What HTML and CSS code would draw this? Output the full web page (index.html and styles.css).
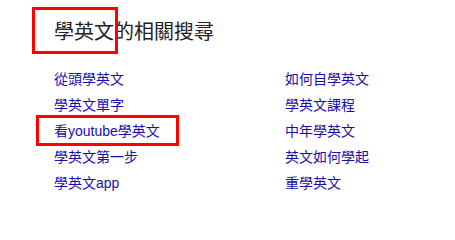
FILE: index.html
```html
<!DOCTYPE html>
<html lang="zh-Hant">
<head>
<meta charset="utf-8">
<link rel="stylesheet" href="styles.css">
</head>
<body>
<div class="related">
  <h2 class="title">學英文的相關搜尋</h2>
  <div class="grid">
    <a class="link" href="#">從頭學英文</a>
    <a class="link" href="#">如何自學英文</a>
    <a class="link" href="#">學英文單字</a>
    <a class="link" href="#">學英文課程</a>
    <a class="link" href="#">看youtube學英文</a>
    <a class="link" href="#">中年學英文</a>
    <a class="link" href="#">學英文第一步</a>
    <a class="link" href="#">英文如何學起</a>
    <a class="link" href="#">學英文app</a>
    <a class="link" href="#">重學英文</a>
  </div>
  <div class="mark mark-title"></div>
  <div class="mark mark-link"></div>
</div>
</body>
</html>
```
FILE: styles.css
```css
html, body {
  margin: 0;
  padding: 0;
  background: #fff;
}
.related {
  position: relative;
  width: 455px;
  height: 224px;
  padding: 18px 0 0 54px;
  box-sizing: border-box;
  font-family: "Liberation Sans", "Noto Sans CJK TC", sans-serif;
}
.title {
  margin: 0;
  font-size: 20px;
  font-weight: normal;
  line-height: 28px;
  color: #222;
}
.grid {
  display: grid;
  grid-template-columns: 231px 1fr;
  grid-auto-rows: 26px;
  margin-top: 20px;
}
.link {
  font-size: 14px;
  line-height: 26px;
  color: #1a0dab;
  text-decoration: none;
}
.mark {
  position: absolute;
  border: 3px solid #f00;
  box-sizing: border-box;
}
.mark-title {
  left: 32px;
  top: 7px;
  width: 86px;
  height: 47px;
}
.mark-link {
  left: 36px;
  top: 115px;
  width: 143px;
  height: 31px;
}
```
